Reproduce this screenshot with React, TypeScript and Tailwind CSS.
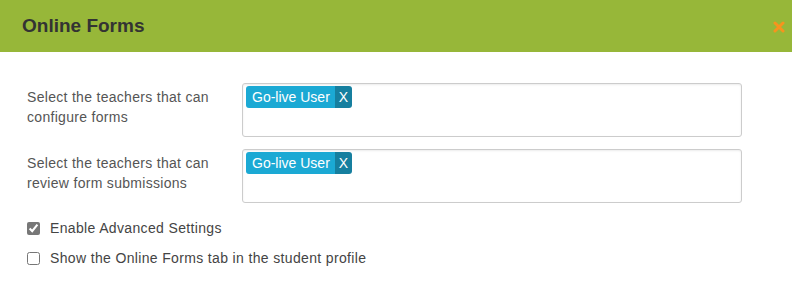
import React from "react";

function UserTag({ name }: { name: string }) {
  return (
    <span className="inline-flex h-[22px] items-stretch overflow-hidden rounded-[3px] text-[14px] leading-[22px] text-white">
      <span className="bg-[#1ba9d4] pl-[6px] pr-[5px]">{name}</span>
      <span className="w-[17px] bg-[#167f9f] text-center">X</span>
    </span>
  );
}

function SelectRow({ label }: { label: React.ReactNode }) {
  return (
    <div className="flex items-start">
      <div className="w-[242px] shrink-0 pl-[27px] pt-[4px] text-[14px] leading-[20px] tracking-[0.3px] text-[#555]">
        {label}
      </div>
      <div className="h-[54px] w-[500px] rounded-[3px] border border-[#ccc] bg-white px-[3px] pt-[1px] shadow-[inset_0_1px_2px_rgba(0,0,0,0.08)]">
        <UserTag name="Go-live User" />
      </div>
    </div>
  );
}

export default function App() {
  return (
    <div className="h-[284px] w-[792px] bg-white font-['Liberation_Sans',Arial,sans-serif]">
      <div className="flex h-[52px] items-center justify-between bg-[#97b739] pl-[22px] pr-[7px]">
        <h1 className="text-[19px] font-semibold text-[#333]">Online Forms</h1>
        <svg width="12" height="12" viewBox="0 0 12 12" className="mt-[2px]">
          <path
            d="M2 2 L10 10 M10 2 L2 10"
            stroke="#f7941d"
            strokeWidth="3"
            strokeLinecap="round"
          />
        </svg>
      </div>
      <div className="flex flex-col gap-[12px] pt-[31px]">
        <SelectRow
          label={
            <>
              Select the teachers that can
              <br />
              configure forms
            </>
          }
        />
        <SelectRow
          label={
            <>
              Select the teachers that can
              <br />
              review form submissions
            </>
          }
        />
      </div>
      <div className="flex flex-col gap-[9px] pl-[27px] pt-[15px] text-[14px] tracking-[0.35px] text-[#444]">
        <label className="flex items-center gap-[10px]">
          <input type="checkbox" defaultChecked className="h-[13px] w-[13px] accent-[#777]" />
          Enable Advanced Settings
        </label>
        <label className="flex items-center gap-[10px]">
          <input type="checkbox" className="h-[13px] w-[13px]" />
          Show the Online Forms tab in the student profile
        </label>
      </div>
    </div>
  );
}
